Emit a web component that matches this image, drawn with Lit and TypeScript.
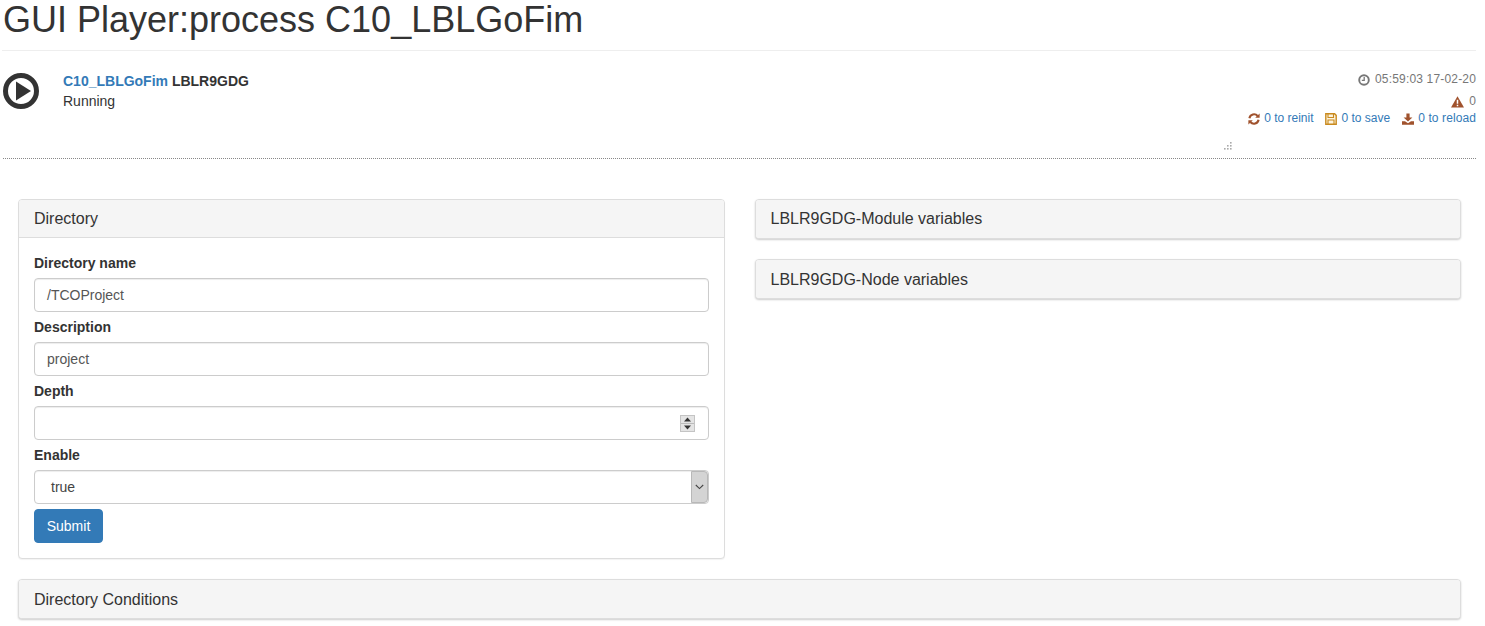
import { LitElement, html, css } from "lit";
import { customElement } from "lit/decorators.js";

@customElement("app-root")
export class AppRoot extends LitElement {
  static styles = css`
    :host { display: block; font-family: "Liberation Sans", Arial, sans-serif; font-size: 14px; line-height: 20px; color: #333; background: #fff; height: 626px; overflow: hidden; }
    * { box-sizing: border-box; }
    .page { width: 1476px; padding-left: 3px; }
    h1 { margin: 0 0 0 -1px; font-size: 36px; font-weight: 400; line-height: 40px; height: 51px; border-bottom: 1px solid #eee; padding: 0 0 0 1px; color: #333; }
    .head { position: relative; height: 108px; border-bottom: 1px dotted #888; display: flex; justify-content: space-between; }
    .proc { display: flex; padding-top: 20px; }
    .play { width: 36px; height: 36px; margin-right: 24px; margin-top: 2px; flex: none; }
    .name { font-weight: 700; font-size: 14px; line-height: 20px; color: #333; }
    .name a { color: #337ab7; }
    .meta { display: flex; flex-direction: column; align-items: flex-end; font-size: 12px; line-height: 17px; color: #777; padding-top: 20px; }
    .meta .row { display: flex; align-items: center; gap: 5px; height: 17px; margin-bottom: 5px; }
    .meta .row.warn { margin-bottom: 0; height: 17px; }
    .date { letter-spacing: .17px; }
    .links { display: flex; gap: 12px; height: 17px; align-items: center; color: #337ab7; }
    .links span { display: flex; align-items: center; gap: 4px; }
    .links span.rl { letter-spacing: .1px; }
    svg.i { width: 12px; height: 12px; flex: none; display: block; }
    svg.w { width: 13px; height: 12px; }
    .grip { position: absolute; left: 1220px; top: 91px; width: 9px; height: 8px; }
    .grid { display: grid; grid-template-columns: 1fr 1fr; gap: 20px 30px; padding: 40px 0 0 15px; width: 1458px; align-items: start; }
    .stack { display: flex; flex-direction: column; gap: 20px; }
    .panel { border: 1px solid #ddd; border-radius: 4px; background: #fff; box-shadow: 0 1px 1px rgba(0,0,0,.05); }
    .ph { background: #f5f5f5; padding: 10px 15px; font-size: 16px; line-height: 18px; height: 38px; border-radius: 3px; color: #333; }
    .ph.low { padding-top: 11px; }
    .panel.open .ph { border-bottom: 1px solid #ddd; border-radius: 3px 3px 0 0; }
    .panel.closed { box-shadow: 0 1px 2px rgba(0,0,0,.2); }
    .wide { grid-column: 1 / 3; }
    .pb { padding: 15px; height: 320px; }
    label { display: block; font-weight: 700; height: 20px; margin-bottom: 5px; line-height: 20px; }
    .ctl { height: 34px; border: 1px solid #ccc; border-radius: 4px; padding: 6px 12px; line-height: 20px; color: #555; margin-bottom: 5px; box-shadow: inset 0 1px 1px rgba(0,0,0,.075); display: flex; align-items: center; position: relative; }
    .spin { position: absolute; right: 13px; top: 8px; width: 15px; height: 17px; background: #e4e4e4; border: 1px solid #c4c4c4; display: flex; flex-direction: column; }
    .spin svg { display: block; width: 13px; height: 7px; }
    .spin svg + svg { border-top: 1px solid #bbb; height: 8px; }
    .sel { padding-left: 16px; color: #444; }
    .arrow { position: absolute; right: 0; top: 0; bottom: 0; width: 17px; background: #d4d4d4; border: 1px solid #b8b8b8; border-radius: 0 4px 4px 0; display: flex; align-items: center; justify-content: center; }
    .btn { display: inline-block; width: 69px; height: 34px; background: #337ab7; border: 1px solid #337ab7; border-radius: 4px; color: #fff; text-align: center; line-height: 32px; font-size: 14px; }
  `;

  render() {
    return html`<div class="page">
      <h1>GUI Player:process C10_LBLGoFim</h1>
      <div class="head">
        <div class="proc">
          <svg class="play" viewBox="0 0 36 36"><circle cx="18" cy="18" r="15.5" fill="none" stroke="#333" stroke-width="5"/><path d="M13 8.5 L28 18 L13 27.5 Z" fill="#333"/></svg>
          <div>
            <div class="name"><a>C10_LBLGoFim</a> LBLR9GDG</div>
            <div>Running</div>
          </div>
        </div>
        <div class="meta">
          <div class="row">
            <svg class="i" viewBox="0 0 12 12"><circle cx="6" cy="6" r="4.8" fill="none" stroke="#777" stroke-width="1.9"/><path d="M6.2 3v3.4H3.8" fill="none" stroke="#777" stroke-width="1.3"/></svg>
            <span class="date">05:59:03 17-02-20</span>
          </div>
          <div class="row warn">
            <svg class="i w" viewBox="0 0 13 12"><path d="M6.5 .3 L13 11.6 H0 Z" fill="#a0522d"/><path d="M6.5 3.8v4M6.5 8.8v1.4" stroke="#fff" stroke-width="1.5"/></svg>
            <span>0</span>
          </div>
          <div class="links">
            <span><svg class="i" viewBox="0 0 12 12"><path d="M1.4 5.2A4.7 4.7 0 0 1 9.6 3" fill="none" stroke="#a0522d" stroke-width="2.1"/><path d="M7.2 4.8 H11.6 V.4Z" fill="#a0522d"/><path d="M10.6 6.8A4.7 4.7 0 0 1 2.4 9" fill="none" stroke="#a0522d" stroke-width="2.1"/><path d="M4.8 7.2H.4v4.4Z" fill="#a0522d"/></svg>0 to reinit</span>
            <span><svg class="i" viewBox="0 0 12 12"><path d="M.8 .8H9.6L11.2 2.4V11.2H.8Z" fill="#fdf3dc" stroke="#c98a1e" stroke-width="1.4"/><path d="M3 1V4.5H8.5V1M3 11V7H9V11" fill="none" stroke="#c98a1e" stroke-width="1.1"/></svg>0 to save</span>
            <span class="rl"><svg class="i" viewBox="0 0 12 12"><path d="M4.4 .4H7.6V4.4H10.4L6 8.6 1.6 4.4H4.4Z" fill="#a0522d"/><path d="M0 8.2H3L6 10.2 9 8.2H12V11.8H0Z" fill="#a0522d"/></svg>0 to reload</span>
          </div>
        </div>
        <svg class="grip" viewBox="0 0 9 8"><g fill="#aaa"><rect x="7" y="0" width="1.6" height="1.6"/><rect x="4" y="3" width="1.6" height="1.6"/><rect x="7" y="3" width="1.6" height="1.6"/><rect x="1" y="6" width="1.6" height="1.6"/><rect x="4" y="6" width="1.6" height="1.6"/><rect x="7" y="6" width="1.6" height="1.6"/></g></svg>
      </div>
      <div class="grid">
        <div class="panel open">
          <div class="ph">Directory</div>
          <div class="pb">
            <label>Directory name</label>
            <div class="ctl">/TCOProject</div>
            <label>Description</label>
            <div class="ctl">project</div>
            <label>Depth</label>
            <div class="ctl"><div class="spin">
              <svg viewBox="0 0 13 7"><path d="M6.5 1.5 L10 5.5 H3Z" fill="#333"/></svg>
              <svg viewBox="0 0 13 7"><path d="M3 1.5 H10 L6.5 5.5Z" fill="#333"/></svg>
            </div></div>
            <label>Enable</label>
            <div class="ctl sel">true<div class="arrow"><svg width="9" height="6" viewBox="0 0 9 6"><path d="M.8 1 L4.5 4.6 L8.2 1" fill="none" stroke="#444" stroke-width="1.1"/></svg></div></div>
            <div class="btn">Submit</div>
          </div>
        </div>
        <div class="stack">
          <div class="panel closed"><div class="ph">LBLR9GDG-Module variables</div></div>
          <div class="panel closed"><div class="ph low">LBLR9GDG-Node variables</div></div>
        </div>
        <div class="panel closed wide"><div class="ph low">Directory Conditions</div></div>
      </div>
    </div>`;
  }
}
